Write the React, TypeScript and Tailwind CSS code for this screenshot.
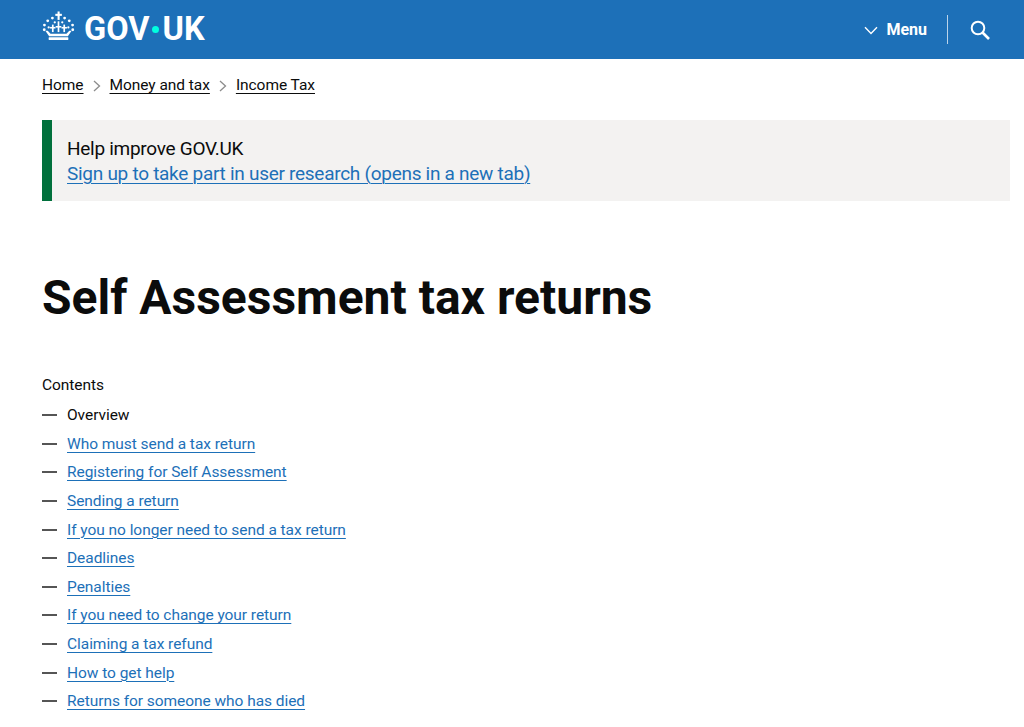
const contents = [
  "Who must send a tax return",
  "Registering for Self Assessment",
  "Sending a return",
  "If you no longer need to send a tax return",
  "Deadlines",
  "Penalties",
  "If you need to change your return",
  "Claiming a tax refund",
  "How to get help",
  "Returns for someone who has died",
];

function Crown() {
  return (
    <svg width="33" height="30" viewBox="0 0 34 32" fill="#fff" className="shrink-0 -mt-[8px]">
      {/* cross */}
      <rect x="16" y="0.5" width="2.2" height="9" />
      <rect x="13.6" y="3" width="7" height="2.2" />
      {/* arch of dots */}
      <circle cx="10.5" cy="7.5" r="1.5" />
      <circle cx="23.5" cy="7.5" r="1.5" />
      <circle cx="5.5" cy="10.5" r="1.5" />
      <circle cx="28.5" cy="10.5" r="1.5" />
      <circle cx="2" cy="15" r="1.5" />
      <circle cx="32" cy="15" r="1.5" />
      <circle cx="1.8" cy="20" r="1.5" />
      <circle cx="32.2" cy="20" r="1.5" />
      <circle cx="6.5" cy="17.5" r="1.2" />
      <circle cx="27.5" cy="17.5" r="1.2" />
      <circle cx="13" cy="12" r="1.2" />
      <circle cx="21" cy="12" r="1.2" />
      {/* inner crosses */}
      <rect x="10" y="14.5" width="1.8" height="8" />
      <rect x="8" y="17" width="5.8" height="1.7" />
      <rect x="16.1" y="11" width="1.8" height="11.5" />
      <rect x="14" y="16" width="6" height="1.7" />
      <rect x="22.2" y="14.5" width="1.8" height="8" />
      <rect x="20.2" y="17" width="5.8" height="1.7" />
      {/* band and base */}
      <path d="M3 21 L7 27 L27 27 L31 21 L28.5 21 L25.5 24.2 L8.5 24.2 L5.5 21 Z" />
      <rect x="6.5" y="28" width="21" height="3" rx="0.5" />
    </svg>
  );
}

function Chevron() {
  return (
    <svg width="8" height="12" viewBox="0 0 8 12" fill="none" stroke="#8c8c8c" strokeWidth="1.3" className="mx-[9px]">
      <path d="M1 1 L6.5 6 L1 11" />
    </svg>
  );
}

export default function App() {
  return (
    <div className="min-h-[727px] bg-white overflow-hidden text-[#0b0c0c] font-['Roboto',sans-serif]">
      {/* Header */}
      <header className="h-[59px] bg-[#1d70b8] text-white pl-[42px] pr-[34px] flex items-center justify-between">
        <a href="#" className="flex items-center gap-[9px]">
          <Crown />
          <span className="flex items-center text-[32.5px] leading-none font-bold">
            GOV
            <span className="mx-[3px] inline-block w-[7px] h-[7px] rounded-full bg-[#00ffe0]" />
            UK
          </span>
        </a>
        <div className="flex items-center">
          <svg width="14" height="9" viewBox="0 0 14 9" fill="none" stroke="#fff" strokeWidth="1.4" className="mr-[8px] mt-[2px]">
            <path d="M1 1.2 L7 7.4 L13 1.2" />
          </svg>
          <span className="text-[16px] font-bold leading-none">Menu</span>
          <div className="w-px h-[29px] bg-white/70 ml-[20px] mr-[22px]" />
          <svg width="20" height="20" viewBox="0 0 20 20" fill="none" stroke="#fff" strokeWidth="2">
            <circle cx="8" cy="8" r="6.3" />
            <path d="M12.5 12.5 L19 19" strokeWidth="2.6" />
          </svg>
        </div>
      </header>

      <main className="pl-[42px] pr-[14px]">
        {/* Breadcrumbs */}
        <nav className="flex items-center h-[54px] text-[15.5px] tracking-[-0.05px] leading-none">
          <a href="#" className="underline underline-offset-[3px]">Home</a>
          <Chevron />
          <a href="#" className="underline underline-offset-[3px]">Money and tax</a>
          <Chevron />
          <a href="#" className="underline underline-offset-[3px]">Income Tax</a>
        </nav>

        {/* Banner */}
        <section className="mt-[7px] h-[81px] bg-[#f3f2f1] border-l-[10px] border-[#00703c] pl-[15px] flex flex-col justify-center text-[19px] tracking-[-0.28px] leading-[25px]">
          <p>Help improve GOV.UK</p>
          <a href="#" className="text-[#1d70b8] underline underline-offset-[3px] decoration-1">
            Sign up to take part in user research (opens in a new tab)
          </a>
        </section>

        <h1 className="mt-[67px] text-[48px] leading-[60px] font-bold">Self Assessment tax returns</h1>

        {/* Contents */}
        <h2 className="mt-[47px] text-[15.5px] tracking-[-0.05px] leading-[20px] font-normal">Contents</h2>
        <ol className="mt-[6px] text-[15.5px] tracking-[-0.05px] leading-[20px]">
          <li className="flex items-center h-[28.6px]">
            <span className="w-[15px] h-[2px] bg-[#555] mr-[10px]" />
            Overview
          </li>
          {contents.map((item) => (
            <li key={item} className="flex items-center h-[28.6px]">
              <span className="w-[15px] h-[2px] bg-[#555] mr-[10px]" />
              <a href="#" className="text-[#1d70b8] underline underline-offset-[3px] decoration-1">{item}</a>
            </li>
          ))}
        </ol>
      </main>
    </div>
  );
}
